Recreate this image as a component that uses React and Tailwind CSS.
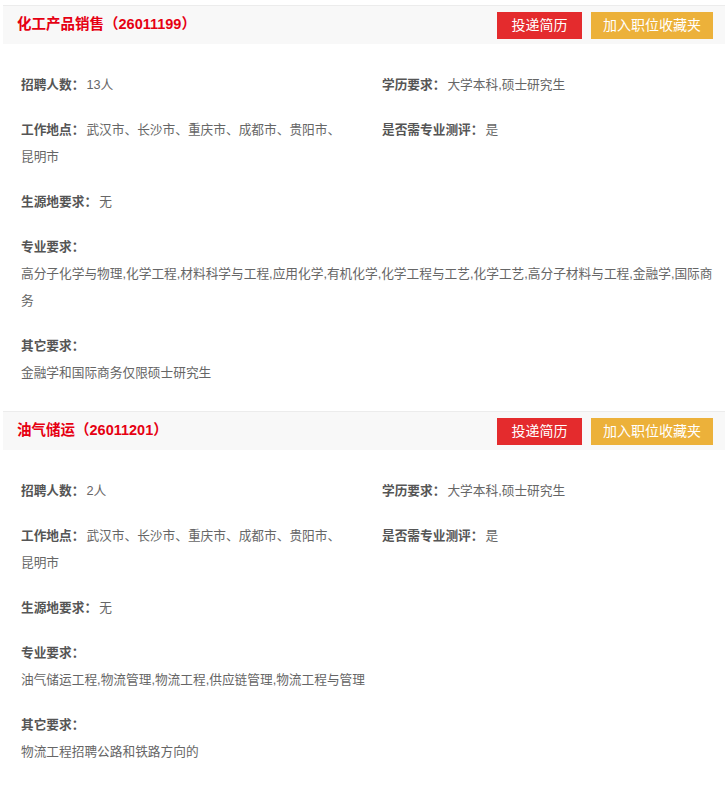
const jobs = [
  {
    title: '化工产品销售（26011199）',
    count: '13人',
    degree: '大学本科,硕士研究生',
    place: '武汉市、长沙市、重庆市、成都市、贵阳市、昆明市',
    test: '是',
    origin: '无',
    major:
      '高分子化学与物理,化学工程,材料科学与工程,应用化学,有机化学,化学工程与工艺,化学工艺,高分子材料与工程,金融学,国际商务',
    other: '金融学和国际商务仅限硕士研究生',
  },
  {
    title: '油气储运（26011201）',
    count: '2人',
    degree: '大学本科,硕士研究生',
    place: '武汉市、长沙市、重庆市、成都市、贵阳市、昆明市',
    test: '是',
    origin: '无',
    major: '油气储运工程,物流管理,物流工程,供应链管理,物流工程与管理',
    other: '物流工程招聘公路和铁路方向的',
  },
];

function Field({ label, value }) {
  return (
    <p className="leading-[27px]">
      <span className="font-bold text-[#555]">{label}：</span>
      <span className="ml-[2px] text-[#666]">{value}</span>
    </p>
  );
}

function JobBlock({ job }) {
  return (
    <div className="mt-[5px]">
      {/* header */}
      <div className="h-[39px] border-t border-[#ececec] bg-[#f8f8f8] flex items-center justify-between pl-[14px] pr-[12px]">
        <h2 className="text-[14.5px] font-bold text-[#e60012]">{job.title}</h2>
        <div className="flex items-center gap-[9px]">
          <button className="w-[85px] h-[27px] bg-[#e42b2d] text-white text-[14px]">投递简历</button>
          <button className="w-[122px] h-[27px] bg-[#ecb13a] text-white text-[14px]">加入职位收藏夹</button>
        </div>
      </div>

      {/* body */}
      <div className="pt-[28px] pb-[1px] text-[12.7px]">
        <div className="grid grid-cols-2 mb-[18px]">
          <div className="pl-[18px] pr-[18px]">
            <Field label="招聘人数" value={job.count} />
          </div>
          <div className="pl-[18px]">
            <Field label="学历要求" value={job.degree} />
          </div>
        </div>
        <div className="grid grid-cols-2 mb-[18px]">
          <div className="pl-[18px] pr-[18px]">
            <Field label="工作地点" value={job.place} />
          </div>
          <div className="pl-[18px]">
            <Field label="是否需专业测评" value={job.test} />
          </div>
        </div>
        <div className="pl-[18px] mb-[18px]">
          <Field label="生源地要求" value={job.origin} />
        </div>
        <div className="pl-[18px] pr-[5px] mb-[18px] leading-[27px]">
          <p className="font-bold text-[#555]">专业要求：</p>
          <p className="text-[#666]">{job.major}</p>
        </div>
        <div className="pl-[18px] mb-[18px] leading-[27px]">
          <p className="font-bold text-[#555]">其它要求：</p>
          <p className="text-[#666]">{job.other}</p>
        </div>
      </div>
    </div>
  );
}

export default function App() {
  return (
    <div
      className="w-[725px] min-h-[789px] bg-white pl-[3px]"
      style={{ fontFamily: '"Liberation Sans", "Noto Sans CJK SC", sans-serif' }}
    >
      {jobs.map((job) => (
        <JobBlock key={job.title} job={job} />
      ))}
    </div>
  );
}
